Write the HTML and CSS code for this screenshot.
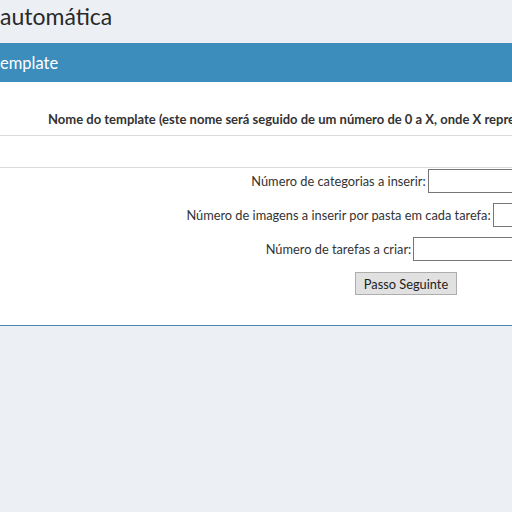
FILE: index.html
```html
<!DOCTYPE html>
<html lang="pt">
<head>
<meta charset="utf-8">
<title>Inserção automática</title>
<link rel="stylesheet" href="styles.css">
</head>
<body>
<div class="page">
  <h1 class="page-title">automática</h1>
  <section class="box">
    <header class="box-header">emplate</header>
    <div class="box-body">
      <div class="name-row">Nome do template (este nome será seguido de um número de 0 a X, onde X representa o número de tarefas)</div>
      <div class="name-input-row"></div>
      <form class="form">
        <div class="form-row"><label>Número de categorias a inserir:</label><input type="text"></div>
        <div class="form-row"><label>Número de imagens a inserir por pasta em cada tarefa:</label><input type="text"></div>
        <div class="form-row"><label>Número de tarefas a criar:</label><input type="text"></div>
        <div class="form-row"><button type="button">Passo Seguinte</button></div>
      </form>
    </div>
  </section>
</div>
</body>
</html>
```
FILE: styles.css
```css
html, body {
  margin: 0;
  padding: 0;
  background: #ecf0f5;
  overflow: hidden;
}
body {
  font-family: Lato, "Noto Sans", sans-serif;
  color: #333;
}
.page {
  width: 812px;
}
.page-title {
  margin: 0;
  height: 43px;
  font-size: 23px;
  font-weight: 400;
  line-height: 33px;
  color: #2a2a2a;
  white-space: nowrap;
}
.box {
  background: #fff;
  border-bottom: 1px solid #4f87ad;
  box-shadow: 0 1px 0 #c9ced6;
}
.box-header {
  height: 39px;
  background: #3c8dbc;
  color: #fff;
  font-size: 16.5px;
  line-height: 40px;
  white-space: nowrap;
}
.box-body {
  padding-top: 28px;
  padding-bottom: 30px;
}
.name-row {
  padding-left: 48px;
  height: 25px;
  font-size: 13px;
  font-weight: 700;
  line-height: 18px;
  white-space: nowrap;
  overflow: hidden;
  border-bottom: 1px solid #dcdcdc;
}
.name-input-row {
  height: 31px;
  border-bottom: 1px solid #dcdcdc;
}
.form {
  display: flex;
  flex-direction: column;
  gap: 10px;
  margin: 0;
}
.form-row {
  display: flex;
  justify-content: center;
  align-items: center;
  gap: 2px;
  font-size: 12.8px;
  white-space: nowrap;
}
.form-row:first-child {
  margin-top: 1px;
}
.form-row input {
  width: 129px;
  height: 20px;
  margin: 0;
  padding: 1px;
  border: 1px solid #767676;
  font: inherit;
}
.form-row button {
  margin-top: 1px;
  height: 23px;
  padding: 0 8px;
  background: #e1e1e1;
  border: 1px solid #adadad;
  border-radius: 0;
  font: inherit;
  color: #222;
}
```
